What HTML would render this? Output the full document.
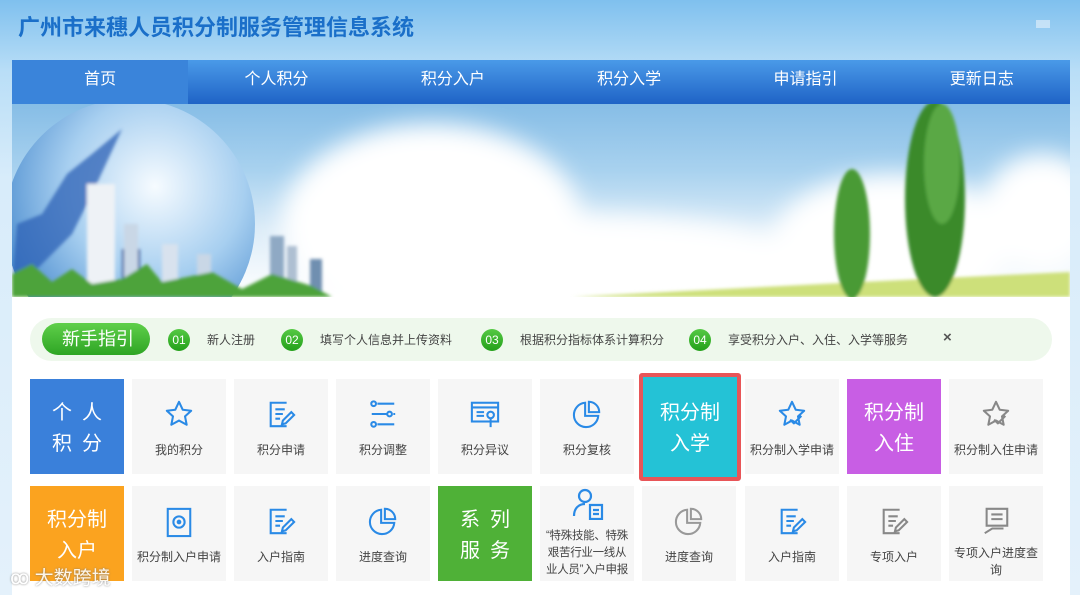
<!DOCTYPE html>
<html><head><meta charset="utf-8"><style>
*{margin:0;padding:0;box-sizing:border-box}
body{width:1080px;height:595px;overflow:hidden;position:relative;font-family:"Liberation Sans","Noto Sans CJK SC",sans-serif;background:linear-gradient(180deg,#7fc0ee 0%,#b9def7 12%,#d8ecfa 30%,#e4f1fb 100%)}
.title{position:absolute;left:18px;top:10px;font-size:22px;font-weight:bold;color:#1a6fc9}
.nav{position:absolute;left:12px;top:60px;width:1058px;height:44px;background:linear-gradient(#4a9ae8,#1f63c6);display:flex}
.nav div{flex:1;color:#fff;font-size:16px;text-align:center;line-height:40px}
.nav div.on{background:#3a84da}
.banner{position:absolute;left:12px;top:104px;width:1058px;height:193px;background:linear-gradient(180deg,#86bde6 0%,#a9d2ef 35%,#dcecf8 65%,#ffffff 100%);overflow:hidden}
.main{position:absolute;left:12px;top:297px;width:1058px;height:298px;background:#fff}
.guide{position:absolute;left:30px;top:318px;width:1022px;height:43px;border-radius:22px;background:#eef8ec}
.gbtn{position:absolute;left:42px;top:323px;width:108px;height:32px;border-radius:16px;background:linear-gradient(#5fcf4a,#2ea524);color:#fff;font-size:18px;line-height:32px;padding-left:20px}
.num{position:absolute;top:329px;width:22px;height:22px;border-radius:11px;background:linear-gradient(#55c944,#23a01a);color:#fff;font-size:12px;text-align:center;line-height:22px}
.gt{position:absolute;top:331px;font-size:12px;color:#444}
.t{position:absolute;width:94px;height:95px;background:#f6f6f6;text-align:center;font-size:12px;color:#444}
.t svg{position:absolute;left:32px;top:20px}
.t span{position:absolute;left:0;right:0;top:62px}
.c{color:#fff;font-size:20px;line-height:31px;padding-top:19px}
.sp{letter-spacing:10px;padding-left:10px}
</style></head><body>
<div class="title">广州市来穗人员积分制服务管理信息系统</div>
<div style="position:absolute;left:1036px;top:20px;width:14px;height:8px;background:#e8f2fb;opacity:.6"></div>
<div class="nav"><div class="on">首页</div><div>个人积分</div><div>积分入户</div><div>积分入学</div><div>申请指引</div><div>更新日志</div></div>
<div class="banner">
<svg width="1058" height="193">
<defs><radialGradient id="g" cx="0.6" cy="0.35" r="0.65"><stop offset="0" stop-color="#f6fbff"/><stop offset="0.55" stop-color="#a7cff0"/><stop offset="1" stop-color="#4f8fd0"/></radialGradient>
<filter id="b"><feGaussianBlur stdDeviation="12"/></filter><filter id="s"><feGaussianBlur stdDeviation="1.5"/></filter></defs>
<g filter="url(#b)" fill="#fff">
<ellipse cx="420" cy="120" rx="150" ry="100"/>
<ellipse cx="560" cy="170" rx="260" ry="60"/>
<ellipse cx="880" cy="140" rx="120" ry="70"/>
<ellipse cx="1030" cy="110" rx="60" ry="60"/>
</g>
<circle cx="118" cy="120" r="125" fill="url(#g)"/>
<g filter="url(#s)">
<path d="M5 120 L30 110 55 70 80 50 110 25 80 90 60 130 20 170 0 180Z" fill="#2d62b6" opacity=".75"/>
<rect x="110" y="145" width="18" height="48" fill="#1f4f99"/>
<rect x="75" y="80" width="28" height="113" fill="#eef2f6"/>
<rect x="112" y="120" width="14" height="73" fill="#c9d7e6"/>
<rect x="150" y="140" width="16" height="53" fill="#d8e2ee"/>
<rect x="185" y="150" width="14" height="43" fill="#c9d7e6"/>
<rect x="258" y="132" width="14" height="61" fill="#8fa9c4"/>
<rect x="275" y="142" width="10" height="51" fill="#aebfd2"/>
<rect x="298" y="155" width="12" height="38" fill="#6f8fb0"/>
<path d="M0 193 L0 170 20 160 40 178 60 165 80 180 110 175 135 160 150 178 200 168 230 185 260 170 300 182 320 193Z" fill="#4ea33a"/>
<path d="M560 193 Q800 180 1058 168 L1058 193Z" fill="#cde07a"/>
<ellipse cx="840" cy="130" rx="18" ry="65" fill="#4a9a36"/>
<ellipse cx="923" cy="95" rx="30" ry="98" fill="#3a8a2a"/>
<ellipse cx="930" cy="60" rx="18" ry="60" fill="#5aa845"/>
</g>
</svg></div>
<div class="main"></div>
<div class="guide"></div>
<div class="gbtn">新手指引</div>
<div class="num" style="left:168px">01</div><div class="gt" style="left:207px">新人注册</div>
<div class="num" style="left:281px">02</div><div class="gt" style="left:320px">填写个人信息并上传资料</div>
<div class="num" style="left:481px">03</div><div class="gt" style="left:520px">根据积分指标体系计算积分</div>
<div class="num" style="left:689px">04</div><div class="gt" style="left:728px">享受积分入户、入住、入学等服务</div>
<div class="gt" style="left:943px;font-size:15px;top:329px;font-weight:bold;color:#555">×</div>

<div class="t c sp" style="left:30px;top:379px;background:#3a80da">个人<br>积分</div>
<div class="t" style="left:132px;top:379px"><svg width="30" height="30" viewBox="0 0 32 32"><path d="M16 3l4 8.5 9 1-6.6 6 1.8 9L16 23l-8.2 4.5 1.8-9L3 12.5l9-1z" fill="none" stroke="#2a8ae6" stroke-width="2.2" stroke-linejoin="round"/></svg><span>我的积分</span></div>
<div class="t" style="left:234px;top:379px"><svg width="30" height="30" viewBox="0 0 32 32"><path d="M22 4H5v25h17M10 11h10M10 16h8M10 21h5M27 14l-9 9-1 4 4-1 9-9z" fill="none" stroke="#2a8ae6" stroke-width="2.2"/></svg><span>积分申请</span></div>
<div class="t" style="left:336px;top:379px"><svg width="30" height="30" viewBox="0 0 32 32"><g fill="none" stroke="#2a8ae6" stroke-width="2.2"><path d="M10 5h18M4 16h16M27 16h2M10 27h18"/><circle cx="6" cy="5" r="2.5"/><circle cx="23" cy="16" r="2.5"/><circle cx="6" cy="27" r="2.5"/></g></svg><span>积分调整</span></div>
<div class="t" style="left:438px;top:379px"><svg width="30" height="30" viewBox="0 0 32 32"><g fill="none" stroke="#2a8ae6" stroke-width="2.2"><rect x="2" y="4" width="28" height="20"/><path d="M2 9h28M7 14h8M7 18h8"/><circle cx="22" cy="17" r="3.5"/><path d="M22 21v9"/></g></svg><span>积分异议</span></div>
<div class="t" style="left:540px;top:379px"><svg width="30" height="30" viewBox="0 0 32 32"><g fill="none" stroke="#2a8ae6" stroke-width="2.2"><path d="M14 4a13 13 0 1 0 14 14H14z"/><path d="M18 3a11 11 0 0 1 11 11H18z"/></g></svg><span>积分复核</span></div>
<div style="position:absolute;left:639px;top:373px;width:102px;height:108px;border:4px solid #e85558;border-radius:3px;background:#24c2d6"></div>
<div class="t c" style="left:643px;top:379px;background:#24c2d6;width:94px">积分制<br>入学</div>
<div class="t" style="left:745px;top:379px"><svg width="30" height="30" viewBox="0 0 32 32"><path d="M16 3l4 8.5 9 1-6.6 6 1.8 9L16 23l-8.2 4.5 1.8-9L3 12.5l9-1z M14 22l4 4 8-8" fill="none" stroke="#2a8ae6" stroke-width="2.2" stroke-linejoin="round"/></svg><span>积分制入学申请</span></div>
<div class="t c" style="left:847px;top:379px;background:#c85ee4">积分制<br>入住</div>
<div class="t" style="left:949px;top:379px"><svg width="30" height="30" viewBox="0 0 32 32"><path d="M16 3l4 8.5 9 1-6.6 6 1.8 9L16 23l-8.2 4.5 1.8-9L3 12.5l9-1z M14 22l4 4 8-8" fill="none" stroke="#888" stroke-width="2.2" stroke-linejoin="round"/></svg><span>积分制入住申请</span></div>

<div class="t c" style="left:30px;top:486px;background:#fba31f">积分制<br>入户</div>
<div class="t" style="left:132px;top:486px"><svg width="30" height="32" viewBox="0 0 32 32"><g fill="none" stroke="#2a8ae6" stroke-width="2.2"><rect x="4" y="2" width="24" height="29"/><circle cx="16" cy="16" r="6"/></g><circle cx="16" cy="16" r="2.5" fill="#2a8ae6"/></svg><span>积分制入户申请</span></div>
<div class="t" style="left:234px;top:486px"><svg width="30" height="30" viewBox="0 0 32 32"><path d="M22 4H5v25h17M10 11h10M10 16h8M10 21h5M27 14l-9 9-1 4 4-1 9-9z" fill="none" stroke="#2a8ae6" stroke-width="2.2"/></svg><span>入户指南</span></div>
<div class="t" style="left:336px;top:486px"><svg width="30" height="30" viewBox="0 0 32 32"><g fill="none" stroke="#2a8ae6" stroke-width="2.2"><path d="M14 4a13 13 0 1 0 14 14H14z"/><path d="M18 3a11 11 0 0 1 11 11H18z"/></g></svg><span>进度查询</span></div>
<div class="t c sp" style="left:438px;top:486px;background:#4fb137">系列<br>服务</div>
<div class="t" style="left:540px;top:486px"><svg width="32" height="32" viewBox="0 0 32 32" style="top:2px"><g fill="none" stroke="#2a8ae6" stroke-width="2.2"><circle cx="13" cy="8" r="6"/><path d="M2 28c0-8 5-12 11-12M18 17h12v14H18zM21 22h6M21 26h6"/></g></svg><span style="top:42px;line-height:17px;font-size:11.5px;white-space:nowrap;letter-spacing:-0.3px">“特殊技能、特殊<br>艰苦行业一线从<br>业人员”入户申报</span></div>
<div class="t" style="left:642px;top:486px"><svg width="30" height="30" viewBox="0 0 32 32"><g fill="none" stroke="#999" stroke-width="2.2"><path d="M14 4a13 13 0 1 0 14 14H14z"/><path d="M18 3a11 11 0 0 1 11 11H18z"/></g></svg><span>进度查询</span></div>
<div class="t" style="left:745px;top:486px"><svg width="30" height="30" viewBox="0 0 32 32"><path d="M22 4H5v25h17M10 11h10M10 16h8M10 21h5M27 14l-9 9-1 4 4-1 9-9z" fill="none" stroke="#2a8ae6" stroke-width="2.2"/></svg><span>入户指南</span></div>
<div class="t" style="left:847px;top:486px"><svg width="30" height="30" viewBox="0 0 32 32"><path d="M22 4H5v25h17M10 11h10M10 16h8M10 21h5M27 14l-9 9-1 4 4-1 9-9z" fill="none" stroke="#888" stroke-width="2.2"/></svg><span>专项入户</span></div>
<div class="t" style="left:949px;top:486px"><svg width="30" height="30" viewBox="0 0 32 32"><g fill="none" stroke="#888" stroke-width="2.2"><path d="M6 3h22v18H6zM11 9h12M11 14h12M4 29l8-5h12"/></g></svg><span style="line-height:17px;top:59px">专项入户进度查询</span></div>
<div style="position:absolute;left:10px;top:563px;color:#fff;font-size:19px;text-shadow:0 0 2px #777;opacity:.9">ꝏ 大数跨境</div>
</body></html>
